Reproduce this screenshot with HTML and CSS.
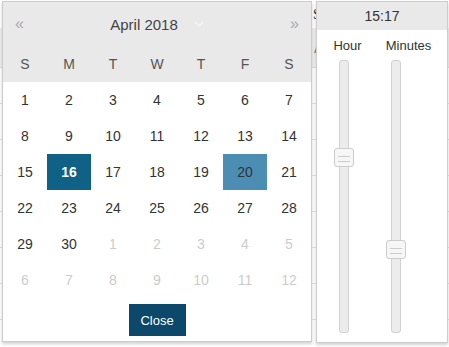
FILE: index.html
```html
<!DOCTYPE html>
<html lang="en">
<head>
    <meta charset="UTF-8">
    <meta name="viewport" content="width=device-width, initial-scale=1.0">
    <title>Date and time picker</title>
    <link rel="stylesheet" href="styles.css">
</head>
<body>
    <!-- page behind the popups -->
    <div class="page">
        <div class="page-top"><span class="page-note">Start</span></div>
        <div class="page-head"><span class="page-col">All</span></div>
        <div class="page-row"></div>
        <div class="page-row"></div>
        <div class="page-row"></div>
        <div class="page-row"></div>
        <div class="page-row"></div>
        <div class="page-row"></div>
        <div class="page-row"></div>
    </div>

    <div class="datepicker">
        <div class="dp-head">
            <div class="dp-nav">
                <span class="dp-arrow">&laquo;</span>
                <div class="dp-title">
                    <span>April 2018</span>
                    <svg class="dp-caret" width="10" height="6" viewBox="0 0 10 6">
                        <path d="M1 1 L5 5 L9 1" fill="none" stroke="#f6f6f6" stroke-width="1.3"/>
                    </svg>
                </div>
                <span class="dp-arrow">&raquo;</span>
            </div>
            <div class="dp-grid dp-weekdays">
                <div>S</div><div>M</div><div>T</div><div>W</div><div>T</div><div>F</div><div>S</div>
            </div>
        </div>
        <div class="dp-grid dp-days">
            <div>1</div><div>2</div><div>3</div><div>4</div><div>5</div><div>6</div><div>7</div>
            <div>8</div><div>9</div><div>10</div><div>11</div><div>12</div><div>13</div><div>14</div>
            <div>15</div><div class="selected">16</div><div>17</div><div>18</div><div>19</div><div class="today">20</div><div>21</div>
            <div>22</div><div>23</div><div>24</div><div>25</div><div>26</div><div>27</div><div>28</div>
            <div>29</div><div>30</div><div class="other">1</div><div class="other">2</div><div class="other">3</div><div class="other">4</div><div class="other">5</div>
            <div class="other">6</div><div class="other">7</div><div class="other">8</div><div class="other">9</div><div class="other">10</div><div class="other">11</div><div class="other">12</div>
        </div>
        <div class="dp-footer">
            <button class="dp-close">Close</button>
        </div>
    </div>

    <div class="timepicker">
        <div class="tp-head">15:17</div>
        <div class="tp-body">
            <div class="tp-col tp-hour">
                <div class="tp-label">Hour</div>
                <div class="tp-track">
                    <div class="tp-handle" style="top: 87px"></div>
                </div>
            </div>
            <div class="tp-col tp-minute">
                <div class="tp-label">Minutes</div>
                <div class="tp-track">
                    <div class="tp-handle" style="top: 179px"></div>
                </div>
            </div>
        </div>
    </div>
</body>
</html>
```

FILE: styles.css
```css
* {
    margin: 0;
    padding: 0;
    box-sizing: border-box;
    font-family: "Liberation Sans", Arial, sans-serif;
}

body {
    background-color: #fff;
    width: 449px;
    height: 347px;
    overflow: hidden;
    position: relative;
}

/* background page */
.page {
    width: 449px;
}

.page-top {
    height: 28px;
    padding-left: 313px;
    line-height: 28px;
}

.page-note {
    font-family: "Liberation Serif", serif;
    font-size: 14px;
    color: #333;
}

.page-head {
    height: 40px;
    background-color: #eee;
    border-bottom: 1px solid #ddd;
    padding-left: 314px;
    line-height: 40px;
}

.page-col {
    font-size: 14px;
    color: #777;
}

.page-row {
    height: 36px;
    border-bottom: 1px solid #e2e2e2;
}

/* date picker */
.datepicker {
    position: absolute;
    left: 2px;
    top: 1px;
    width: 310px;
    background-color: #fff;
    border: 1px solid #ccc;
    box-shadow: 0 2px 3px rgba(0, 0, 0, 0.18);
}

.dp-head {
    background-color: #e9e9e9;
}

.dp-nav {
    height: 44px;
    display: flex;
    align-items: center;
    justify-content: space-between;
    padding: 0 12px;
}

.dp-arrow {
    font-size: 16px;
    color: #aaa;
    width: 9px;
}

.dp-title {
    display: flex;
    align-items: center;
    gap: 16px;
    font-size: 15px;
    color: #444;
}

.dp-grid {
    display: grid;
    grid-template-columns: repeat(7, 44px);
    grid-auto-rows: 36px;
}

.dp-grid div {
    display: flex;
    justify-content: center;
    align-items: center;
    font-size: 14px;
    color: #333;
}

.dp-weekdays div {
    color: #555;
}

.dp-days .selected {
    background-color: #106186;
    color: #fff;
    font-weight: bold;
}

.dp-days .today {
    background-color: #4b8db3;
}

.dp-days .other {
    color: #ccc;
}

.dp-footer {
    padding: 6px 0 5px;
    text-align: center;
}

.dp-close {
    width: 57px;
    height: 32px;
    border: none;
    background-color: #0b4869;
    color: #fff;
    font-size: 13px;
    cursor: pointer;
}

/* time picker */
.timepicker {
    position: absolute;
    left: 316px;
    top: 1px;
    width: 132px;
    height: 342px;
    background-color: #fff;
    border: 1px solid #ccc;
    box-shadow: 0 2px 3px rgba(0, 0, 0, 0.18);
}

.tp-head {
    height: 28px;
    background-color: #e9e9e9;
    display: flex;
    justify-content: center;
    align-items: center;
    font-size: 14px;
    color: #333;
}

.tp-body {
    display: flex;
    padding-top: 8px;
}

.tp-col {
    width: 61px;
}

.tp-label {
    text-align: center;
    font-size: 13px;
    line-height: 16px;
    color: #333;
    margin-bottom: 6px;
}

.tp-track {
    position: relative;
    width: 10px;
    height: 273px;
    background-color: #ececec;
    border: 1px solid #d2d2d2;
    border-radius: 3px;
}

.tp-hour .tp-track {
    margin-left: 22px;
}

.tp-minute .tp-track {
    margin-left: 13px;
}

.tp-handle {
    position: absolute;
    left: -6px;
    width: 20px;
    height: 19px;
    background-color: #f6f6f6;
    border: 1px solid #ccc;
    border-radius: 3px;
}

.tp-handle::after {
    content: "";
    position: absolute;
    left: 3px;
    top: 7px;
    width: 12px;
    height: 4px;
    border-top: 1px solid #ccc;
    border-bottom: 1px solid #ccc;
}
```
